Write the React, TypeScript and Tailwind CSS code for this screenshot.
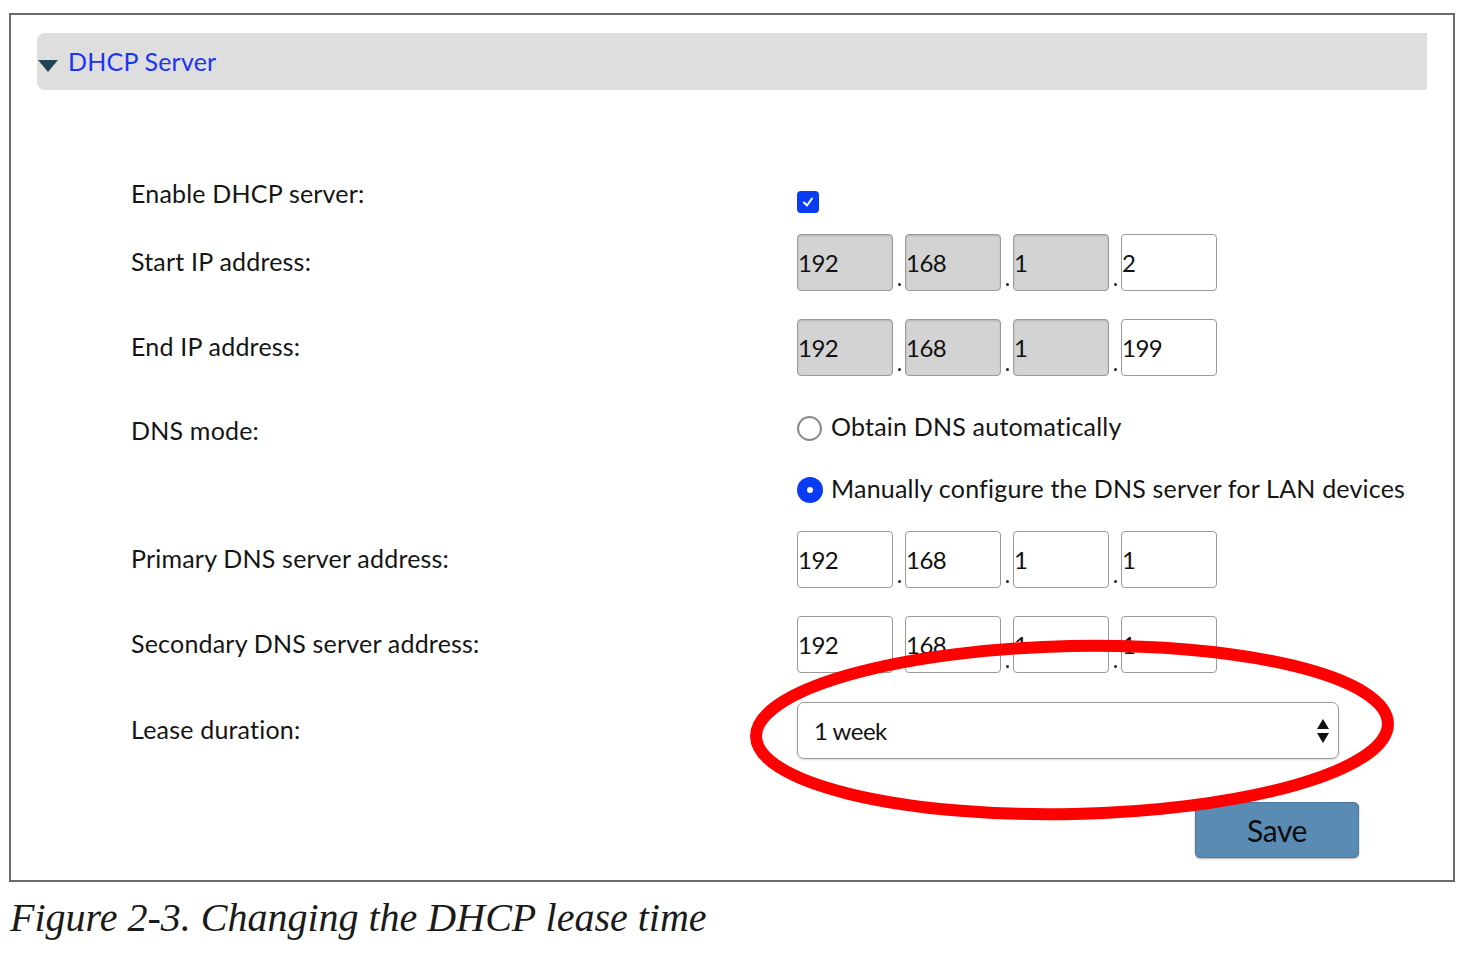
import React from "react"

const ui = { fontFamily: "Lato, 'Open Sans', sans-serif" }

function Octets({ values, locked }: { values: string[]; locked: number }) {
  return (
    <div className="flex h-[57px] items-stretch">
      {values.map((v, i) => (
        <React.Fragment key={i}>
          {i > 0 && (
            <div className="flex w-[12px] items-end justify-center pb-[5px]">
              <span className="h-[3px] w-[3px] rounded-full bg-[#222]" />
            </div>
          )}
          <div
            className={`flex w-[96px] items-center rounded-[4px] border border-[#9a9a9a] text-[24px] tracking-[-0.5px] text-[#111] ${
              i < locked ? "bg-[#d3d3d3] shadow-[inset_0_1px_2px_rgba(0,0,0,0.15)]" : "bg-white"
            }`}
          >
            {v}
          </div>
        </React.Fragment>
      ))}
    </div>
  )
}

function Label({ children, className = "" }: { children: React.ReactNode; className?: string }) {
  return <div className={`text-[25px] tracking-[0.2px] text-[#151515] ${className}`}>{children}</div>
}

export default function App() {
  return (
    <div className="min-h-[971px] w-[1480px] bg-white" style={ui}>
      <div className="relative ml-[9px] mt-[13px] h-[869px] w-[1446px] border-2 border-[#6a6a6a] px-[26px] pt-[18px]">
        <div className="flex h-[57px] items-center rounded-l-[8px] bg-[#dedede] pl-[1px]">
          <svg width="20" height="12" viewBox="0 0 20 12" className="mt-[8px]">
            <path d="M0 0 H20 L10 12 Z" fill="#1f4552" />
          </svg>
          <span className="ml-[10px] text-[25px] tracking-[0.2px] text-[#1a35f2]">DHCP Server</span>
        </div>

        <div className="grid grid-cols-[666px_1fr] pl-[94px] pt-[90px]">
          <Label className="leading-[26px]">Enable DHCP server:</Label>
          <div className="h-[42px]">
            <div className="mt-[11px] flex h-[22px] w-[22px] items-center justify-center rounded-[4px] bg-[#0a3cf5]">
              <svg width="12" height="12" viewBox="0 0 12 12">
                <path d="M2 6.5 L5 9.5 L10 2.5" stroke="white" strokeWidth="2" fill="none" strokeLinecap="round" strokeLinejoin="round" />
              </svg>
            </div>
          </div>

          <Label className="mt-[12px] flex h-[57px] items-center pb-[2px]">Start IP address:</Label>
          <div className="mt-[12px]">
            <Octets values={["192", "168", "1", "2"]} locked={3} />
          </div>

          <Label className="mt-[28px] flex h-[57px] items-center pb-[2px]">End IP address:</Label>
          <div className="mt-[28px]">
            <Octets values={["192", "168", "1", "199"]} locked={3} />
          </div>

          <Label className="mt-[37px] flex h-[30px] items-center pt-[6px]">DNS mode:</Label>
          <div className="mt-[37px] flex h-[30px] items-center">
            <span className="h-[25px] w-[25px] rounded-full border-2 border-[#8a8a8a] bg-white" />
            <span className="ml-[9px] pb-[2px] text-[25px] tracking-[0.2px] text-[#151515]">Obtain DNS automatically</span>
          </div>

          <div />
          <div className="mt-[32px] flex h-[30px] items-center">
            <span className="flex h-[26px] w-[26px] items-center justify-center rounded-full bg-[#0a3cf5]">
              <span className="h-[6px] w-[6px] rounded-full bg-white" />
            </span>
            <span className="ml-[8px] pb-[2px] text-[25px] tracking-[0.2px] text-[#151515]">
              Manually configure the DNS server for LAN devices
            </span>
          </div>

          <Label className="mt-[26px] flex h-[57px] items-center pb-[2px]">Primary DNS server address:</Label>
          <div className="mt-[26px]">
            <Octets values={["192", "168", "1", "1"]} locked={0} />
          </div>

          <Label className="mt-[28px] flex h-[57px] items-center pb-[2px]">Secondary DNS server address:</Label>
          <div className="mt-[28px]">
            <Octets values={["192", "168", "1", "1"]} locked={0} />
          </div>

          <Label className="mt-[29px] flex h-[57px] items-center pb-[2px]">Lease duration:</Label>
          <div className="mt-[29px]">
            <div className="flex h-[57px] w-[542px] items-center justify-between rounded-[7px] border border-[#9a9a9a] bg-white pl-[16px] pr-[8px] shadow-[0_1px_2px_rgba(0,0,0,0.15)]">
              <span className="text-[24px] tracking-[-0.5px] text-[#111]">1 week</span>
              <svg width="14" height="26" viewBox="0 0 14 26">
                <path d="M7 1 L13 11 H1 Z" fill="#111" />
                <path d="M1 15 H13 L7 25 Z" fill="#111" />
              </svg>
            </div>
          </div>

          <div />
          <div className="mt-[43px] flex w-[562px] justify-end">
            <div className="flex h-[56px] w-[164px] items-center justify-center rounded-[5px] border border-[#4a7aa0] bg-[#5a8bb2] text-[30px] tracking-[-0.4px] text-[#0c0c0c] shadow-[0_1px_2px_rgba(0,0,0,0.3)]">
              Save
            </div>
          </div>
        </div>

        <svg className="pointer-events-none absolute left-[727px] top-[612px]" width="672" height="210" viewBox="0 0 672 210">
          <ellipse cx="334" cy="103" rx="316" ry="84" transform="rotate(-1.2 334 103)" fill="none" stroke="#ff0000" strokeWidth="12" />
        </svg>
      </div>

      <div
        className="ml-[10px] mt-[12px] text-[40px] italic leading-[48px] text-[#1a1a1a]"
        style={{ fontFamily: "'Liberation Serif', 'Times New Roman', serif" }}
      >
        Figure 2-3. Changing the DHCP lease time
      </div>
    </div>
  )
}
